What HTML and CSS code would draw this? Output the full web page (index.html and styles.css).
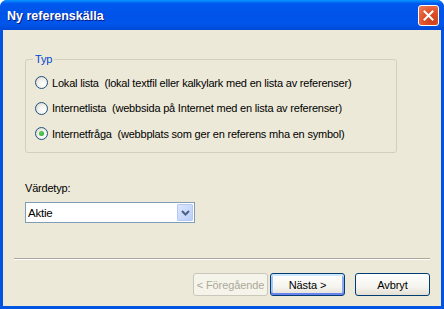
FILE: index.html
```html
<!DOCTYPE html>
<html lang="sv">
<head>
    <meta charset="UTF-8">
    <title>Ny referenskälla</title>
    <link rel="stylesheet" href="styles.css">
</head>
<body>
    <div class="window">
        <div class="titlebar">
            <span class="title">Ny referenskälla</span>
            <button class="close-btn" aria-label="Stäng">
                <svg width="11" height="11" viewBox="0 0 11 11">
                    <path d="M1.5 1.5 L9.5 9.5 M9.5 1.5 L1.5 9.5" stroke="#fff" stroke-width="2" stroke-linecap="square"/>
                </svg>
            </button>
        </div>

        <div class="dialog-body">
            <fieldset class="group">
                <legend>Typ</legend>
                <label class="radio-row">
                    <input type="radio" name="typ">
                    <span>Lokal lista&nbsp; (lokal textfil eller kalkylark med en lista av referenser)</span>
                </label>
                <label class="radio-row">
                    <input type="radio" name="typ">
                    <span>Internetlista&nbsp; (webbsida på Internet med en lista av referenser)</span>
                </label>
                <label class="radio-row">
                    <input type="radio" name="typ" checked>
                    <span>Internetfråga&nbsp; (webbplats som ger en referens mha en symbol)</span>
                </label>
            </fieldset>

            <div class="field-label">Värdetyp:</div>
            <div class="combo">
                <span class="combo-value">Aktie</span>
                <span class="combo-btn">
                    <svg width="9" height="6" viewBox="0 0 9 6">
                        <path d="M1 1 L4.5 4.5 L8 1" fill="none" stroke="#4d6185" stroke-width="2"/>
                    </svg>
                </span>
            </div>

            <div class="separator"></div>

            <div class="button-row">
                <button class="btn" disabled>&lt; Föregående</button>
                <button class="btn btn-default">Nästa &gt;</button>
                <button class="btn btn-cancel">Avbryt</button>
            </div>
        </div>
    </div>
</body>
</html>
```

FILE: styles.css
```css
html, body {
    margin: 0;
    padding: 0;
    background: #fff;
}

body {
    font-family: "Liberation Sans", Arial, sans-serif;
    font-size: 11px;
    letter-spacing: -0.2px;
    color: #000;
}

.window {
    width: 444px;
    height: 309px;
    display: flex;
    flex-direction: column;
    background: #0054e3;
    border-radius: 7px 7px 0 0;
    overflow: hidden;
}

.titlebar {
    height: 30px;
    flex-shrink: 0;
    display: flex;
    align-items: center;
    justify-content: space-between;
    padding: 0 5px 0 7px;
    background: linear-gradient(#0997ff 0%, #0058ee 12%, #0053e8 45%, #0055ea 80%, #0049d6 100%);
}

.title {
    font-family: "Liberation Sans", Arial, sans-serif;
    font-weight: bold;
    font-size: 12.5px;
    letter-spacing: 0;
    color: #fff;
    text-shadow: 1px 1px #0a1883;
    margin-top: 1px;
}

.close-btn {
    width: 21px;
    height: 21px;
    padding: 0;
    display: flex;
    align-items: center;
    justify-content: center;
    border: 1px solid #fff;
    border-radius: 3px;
    background: radial-gradient(circle at 70% 75%, #c9401b 0%, #e0502a 45%, #ec7f5b 100%);
}

.dialog-body {
    flex: 1;
    margin: 0 3px 3px 3px;
    background: #ece9d8;
    padding: 23px 11px 0 22px;
    display: flex;
    flex-direction: column;
}

.group {
    margin: 0;
    width: 372px;
    box-sizing: border-box;
    height: 100px;
    border: 1px solid #d0d0bf;
    border-radius: 3px;
    padding: 10px 0 0 7px;
}

.group legend {
    color: #0046d5;
    padding: 0 2px;
    line-height: 13px;
}

.radio-row {
    display: flex;
    align-items: center;
    height: 13px;
    margin-bottom: 12.5px;
    margin-left: 2px;
}

.radio-row input {
    appearance: none;
    -webkit-appearance: none;
    width: 13px;
    height: 13px;
    margin: 0 4px 0 0;
    border: 1px solid #1c5180;
    border-radius: 50%;
    box-sizing: border-box;
    background: radial-gradient(circle at 65% 65%, #fff 0%, #f5f4ef 40%, #d4d1c4 100%);
    position: relative;
}

.radio-row input:checked::after {
    content: "";
    position: absolute;
    left: 3px;
    top: 3px;
    width: 5px;
    height: 5px;
    border-radius: 50%;
    background: radial-gradient(circle at 40% 40%, #5ed35e, #21a121);
}

.field-label {
    margin-top: 29px;
    line-height: 13px;
}

.combo {
    margin-top: 7px;
    width: 170px;
    height: 21px;
    box-sizing: border-box;
    border: 1px solid #7f9db9;
    background: #fff;
    display: flex;
    align-items: center;
    justify-content: space-between;
    padding: 0 1px 0 2px;
}

.combo-value {
    font-size: 11.5px;
}

.combo-btn {
    width: 16px;
    height: 17px;
    box-sizing: border-box;
    border: 1px solid #b6c8f4;
    border-radius: 1px;
    background: linear-gradient(135deg, #dbe6fe, #bccffa);
    display: flex;
    align-items: center;
    justify-content: center;
}

.separator {
    margin: 35px 0 0 -11px;
    height: 1px;
    width: 416px;
    background: #aca899;
    border-bottom: 1px solid #fff;
}

.button-row {
    display: flex;
    justify-content: flex-end;
    margin-top: 13px;
}

.btn {
    width: 75px;
    height: 23px;
    font-family: "Liberation Sans", Arial, sans-serif;
    font-size: 11px;
    letter-spacing: -0.1px;
    color: #000;
    border: 1px solid #003c74;
    border-radius: 3px;
    background: linear-gradient(#ffffff 0%, #f5f4ef 60%, #e3e0d4 100%);
    padding: 0;
    margin-left: 2px;
}

.btn:disabled {
    color: #aca899;
    border-color: #c9c7ba;
    background: #f5f4ea;
}

.btn-default {
    box-shadow: inset 0 2px #cee7ff, inset 0 -2px #6982ee, inset 2px 0 #a8c6f5, inset -2px 0 #8ba8f0;
}

.btn-cancel {
    margin-left: 10px;
}
```
